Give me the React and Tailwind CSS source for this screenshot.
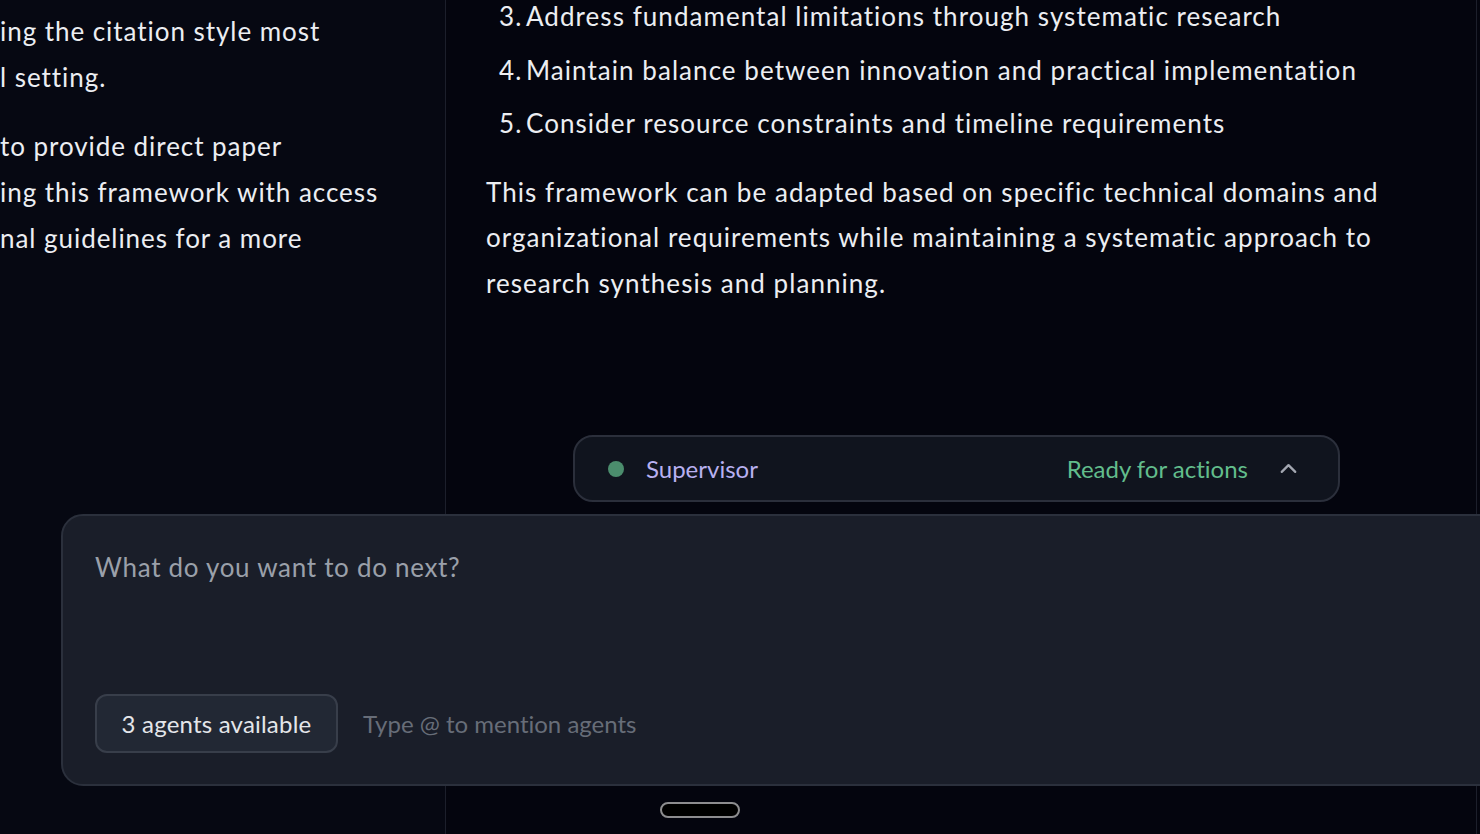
import React from 'react';
import { ChevronUp } from 'lucide-react';

const font = { fontFamily: 'Lato, "Noto Sans", sans-serif' };

const steps = [
  { n: '3.', text: 'Address fundamental limitations through systematic research' },
  { n: '4.', text: 'Maintain balance between innovation and practical implementation' },
  { n: '5.', text: 'Consider resource constraints and timeline requirements' },
];

export default function App() {
  return (
    <div
      className="relative flex h-[834px] w-[1480px] overflow-hidden bg-[#04050e] text-[#eceef2] [font-variant-ligatures:none]"
      style={font}
    >
      {/* left column */}
      <div className="w-[446px] shrink-0 border-r border-[#1c1f2b] bg-[#060812] pt-[8px] text-[26px] leading-[46px] tracking-[0.95px]">
        <p>ing the citation style most</p>
        <p>l setting.</p>
        <div className="mt-[23px]">
          <p>to provide direct paper</p>
          <p>ing this framework with access</p>
          <p>nal guidelines for a more</p>
        </div>
      </div>

      {/* right column */}
      <div className="w-[1031px] shrink-0 border-r border-[#1c1f2b] pl-[40px] text-[26px] leading-[45.5px] tracking-[1.05px]">
        <ol className="-mt-[6px] flex flex-col gap-[8px]">
          {steps.map((s) => (
            <li key={s.n} className="flex pl-[13px]">
              <span className="w-[27px] shrink-0">{s.n}</span>
              <span>{s.text}</span>
            </li>
          ))}
        </ol>
        <p className="mt-[23px] max-w-[920px]">
          This framework can be adapted based on specific technical domains and
          organizational requirements while maintaining a systematic approach to
          research synthesis and planning.
        </p>
      </div>

      {/* composer */}
      <div className="absolute left-[61px] top-[435px] w-[1460px]">
        <div className="ml-[512px] flex h-[67px] w-[767px] items-center rounded-[20px] border-2 border-[#2b2f3b] bg-[#10141e] pl-[33px] pr-[36px] text-[24px]">
          <span className="h-[16px] w-[16px] rounded-full bg-[#4b8d6d]" />
          <span className="ml-[22px] text-[#b8b0f0]">Supervisor</span>
          <span className="ml-auto text-[#62bd8c]">Ready for actions</span>
          <ChevronUp className="ml-[27px] h-[27px] w-[27px] text-[#a3a7b1]" strokeWidth={2} />
        </div>
        <div className="mt-[12px] flex h-[272px] flex-col rounded-[22px] border-2 border-[#2b303c] bg-[#1a1e29] px-[32px] pt-[34px] pb-[31px]">
          <p className="text-[26px] leading-[34px] tracking-[0.7px] text-[#9aa0aa]">What do you want to do next?</p>
          <div className="mt-auto flex items-center">
            <div className="flex h-[59px] w-[243px] items-center justify-center rounded-[12px] border-2 border-[#383e4a] bg-[#222834] text-[24px] tracking-[0.2px] text-[#e4e6ea]">
              3 agents available
            </div>
            <span className="ml-[25px] text-[24px] text-[#676d78]">Type @ to mention agents</span>
          </div>
        </div>
      </div>

      {/* home indicator */}
      <div className="absolute left-[660px] top-[802px] h-[16px] w-[80px] rounded-full border-2 border-[#8d8d8f] bg-black" />
    </div>
  );
}
